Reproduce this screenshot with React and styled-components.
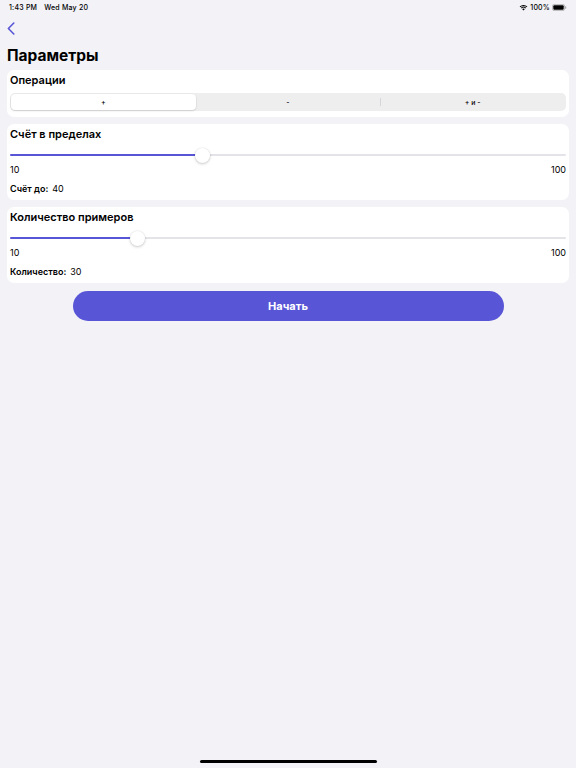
import React from 'react'
import styled, { createGlobalStyle } from 'styled-components'

const GlobalStyle = createGlobalStyle`
html, body {
  margin: 0;
  padding: 0;
  background: #F2F2F7;
}
* { box-sizing: border-box; }
body {
  font-family: Inter, "Noto Sans", sans-serif;
  color: #000;
}
`

const accent = '#5856D6'

const Screen = styled.div`
  min-height: 100vh;
  display: flex;
  flex-direction: column;
  background: #F2F2F7;
`

const StatusBar = styled.div`
  height: 14px;
  padding: 0 9px;
  display: flex;
  align-items: center;
  justify-content: space-between;
  font-size: 7px;
  font-weight: 500;
  letter-spacing: 0.2px;
`

const StatusLeft = styled.div`
  display: flex;
  gap: 7px;
`

const StatusRight = styled.div`
  display: flex;
  align-items: center;
  gap: 2px;
`

const NavBar = styled.div`
  height: 28px;
  padding-left: 7px;
  display: flex;
  align-items: center;
`

const BackButton = styled.button`
  border: 0;
  background: none;
  padding: 0;
  display: flex;
  cursor: pointer;
`

const PageTitle = styled.h1`
  margin: 0;
  padding: 0 7px;
  height: 27px;
  line-height: 27px;
  font-size: 15.5px;
  font-weight: 700;
`

const Content = styled.div`
  padding: 1px 7px 0;
  display: flex;
  flex-direction: column;
  gap: 7px;
`

const Card = styled.section`
  background: #fff;
  border-radius: 7px;
  padding: 3px 3px 6px;
  display: flex;
  flex-direction: column;
`

const CardTitle = styled.h2`
  margin: 0;
  height: 14px;
  line-height: 15px;
  font-size: 11px;
  font-weight: 600;
`

const Segmented = styled.div`
  margin-top: 6px;
  height: 18px;
  background: #EEEEEF;
  border-radius: 5px;
  padding: 1px;
  display: grid;
  grid-template-columns: repeat(3, 1fr);
`

const Segment = styled.div`
  position: relative;
  display: flex;
  align-items: center;
  justify-content: center;
  font-size: 7px;
  font-weight: 500;
  border-radius: 4px;
  background: ${p => (p.$active ? '#fff' : 'transparent')};
  box-shadow: ${p => (p.$active ? '0 1px 2px rgba(0,0,0,0.12), 0 0 0 0.5px rgba(0,0,0,0.04)' : 'none')};

  &::before {
    content: '';
    display: ${p => (p.$divider ? 'block' : 'none')};
    position: absolute;
    left: 0;
    top: 4px;
    bottom: 4px;
    width: 1px;
    background: #D6D6DA;
  }
`

const SliderBox = styled.div`
  margin-top: 5px;
  height: 18px;
  position: relative;
  display: flex;
  align-items: center;
`

const Track = styled.div`
  width: 100%;
  height: 2px;
  border-radius: 1px;
  background: #E3E3E8;
  position: relative;
`

const Fill = styled.div`
  height: 100%;
  border-radius: 1px;
  background: ${accent};
`

const Thumb = styled.div`
  position: absolute;
  top: 50%;
  width: 15px;
  height: 15px;
  margin: -7.5px 0 0 -7.5px;
  border-radius: 50%;
  background: #fff;
  box-shadow: 0 1px 3px rgba(0,0,0,0.2), 0 0 0 0.5px rgba(0,0,0,0.05);
`

const RangeRow = styled.div`
  height: 10px;
  line-height: 11px;
  display: flex;
  justify-content: space-between;
  font-size: 9px;
`

const InfoRow = styled.div`
  margin-top: 8px;
  height: 12px;
  line-height: 13px;
  font-size: 9px;
  display: flex;
  gap: 4px;
`

const InfoLabel = styled.span`
  font-weight: 600;
`

const StartButton = styled.button`
  align-self: center;
  margin-top: 1px;
  width: 431px;
  height: 30px;
  border: 0;
  border-radius: 15px;
  background: ${accent};
  color: #fff;
  font-family: Inter, "Noto Sans", sans-serif;
  font-size: 11px;
  font-weight: 700;
  cursor: pointer;
`

const HomeIndicator = styled.div`
  margin: auto auto 5px;
  width: 177px;
  height: 3px;
  border-radius: 2px;
  background: #000;
`

const Slider = ({ fraction }) => (
  <SliderBox>
    <Track>
      <Fill style={{ width: `${fraction * 100}%` }} />
      <Thumb style={{ left: `${fraction * 100}%` }} />
    </Track>
  </SliderBox>
)

const settings = [
  { title: 'Счёт в пределах', label: 'Счёт до:', value: 40, fraction: 0.347 },
  { title: 'Количество примеров', label: 'Количество:', value: 30, fraction: 0.229 },
]

const App = () => (
  <Screen>
    <GlobalStyle />
    <StatusBar>
      <StatusLeft>
        <span>1:43 PM</span>
        <span>Wed May 20</span>
      </StatusLeft>
      <StatusRight>
        <svg width="9" height="7" viewBox="0 0 18 13">
          <path d="M9 12.5 6.3 9.6a3.9 3.9 0 0 1 5.4 0z" fill="#000" />
          <path d="M3.9 7.2a7.3 7.3 0 0 1 10.2 0l-1.3 1.3a5.5 5.5 0 0 0-7.6 0z" fill="#000" />
          <path d="M1.3 4.6a11 11 0 0 1 15.4 0l-1.3 1.3a9.2 9.2 0 0 0-12.8 0z" fill="#000" />
        </svg>
        <span>100%</span>
        <svg width="15" height="7" viewBox="0 0 15 7">
          <rect x="0.5" y="0.5" width="12" height="6" rx="1.5" fill="none" stroke="#999" strokeWidth="0.6" />
          <rect x="1.3" y="1.3" width="10.4" height="4.4" rx="1" fill="#000" />
          <rect x="13.2" y="2.3" width="1" height="2.4" rx="0.5" fill="#999" />
        </svg>
      </StatusRight>
    </StatusBar>
    <NavBar>
      <BackButton aria-label="Назад">
        <svg width="8" height="13" viewBox="0 0 8 13">
          <path d="M6.8 1 1.4 6.5 6.8 12" fill="none" stroke={accent} strokeWidth="1.6" strokeLinecap="round" strokeLinejoin="round" />
        </svg>
      </BackButton>
    </NavBar>
    <PageTitle>Параметры</PageTitle>
    <Content>
      <Card>
        <CardTitle>Операции</CardTitle>
        <Segmented>
          <Segment $active>+</Segment>
          <Segment>-</Segment>
          <Segment $divider>+ и -</Segment>
        </Segmented>
      </Card>
      {settings.map(s => (
        <Card key={s.title}>
          <CardTitle>{s.title}</CardTitle>
          <Slider fraction={s.fraction} />
          <RangeRow>
            <span>10</span>
            <span>100</span>
          </RangeRow>
          <InfoRow>
            <InfoLabel>{s.label}</InfoLabel>
            <span>{s.value}</span>
          </InfoRow>
        </Card>
      ))}
      <StartButton>Начать</StartButton>
    </Content>
    <HomeIndicator />
  </Screen>
)

export default App
